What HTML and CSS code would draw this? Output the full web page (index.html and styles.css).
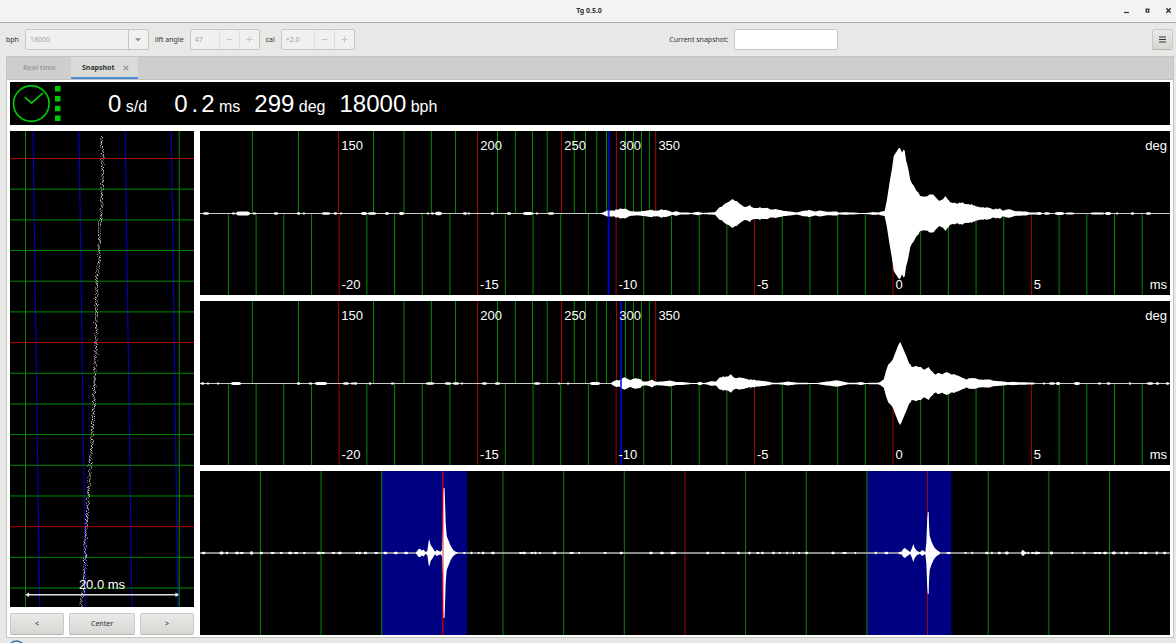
FILE: index.html
```html
<!DOCTYPE html>
<html lang="en">
<head>
<meta charset="utf-8">
<title>Tg 0.5.0</title>
<link rel="stylesheet" href="styles.css">
</head>
<body>
<header class="titlebar">
  <span class="title-space"></span>
  <h1 class="title">Tg 0.5.0</h1>
  <div class="window-buttons">
    <button class="window-button" aria-label="Minimize"><svg width="7" height="7"><path d="M1 5.5H6" stroke="#2e3436" stroke-width="1.2"/></svg></button>
    <button class="window-button" aria-label="Maximize"><svg width="7" height="7"><rect x="2.2" y="2.2" width="2.6" height="2.8" fill="none" stroke="#2e3436" stroke-width="1.3"/></svg></button>
    <button class="window-button" aria-label="Close"><svg width="7" height="7"><path d="M1.3 1.3L5.7 5.7M5.7 1.3L1.3 5.7" stroke="#2e3436" stroke-width="1.4"/></svg></button>
  </div>
</header>

<div class="toolbar">
  <label for="bph">bph</label>
  <div class="combo">
    <select id="bph" disabled><option>18000</option></select>
    <span class="combo-arrow"><svg width="6" height="4"><path d="M0 .3H6L3 3.5Z" fill="#8b8e8f"/></svg></span>
  </div>
  <label for="lift">lift angle</label>
  <div class="spin">
    <input id="lift" class="spin-lift" value="47" disabled>
    <button disabled aria-label="Decrease lift angle"><svg width="7" height="7"><path d="M.5 3.5H6.5" stroke="#c4c4c2"/></svg></button>
    <button disabled aria-label="Increase lift angle"><svg width="7" height="7"><path d="M.5 3.5H6.5M3.5 .5V6.5" stroke="#c4c4c2"/></svg></button>
  </div>
  <label for="cal">cal</label>
  <div class="spin">
    <input id="cal" class="spin-cal" value="+2.0" disabled>
    <button disabled aria-label="Decrease cal"><svg width="7" height="7"><path d="M.5 3.5H6.5" stroke="#c4c4c2"/></svg></button>
    <button disabled aria-label="Increase cal"><svg width="7" height="7"><path d="M.5 3.5H6.5M3.5 .5V6.5" stroke="#c4c4c2"/></svg></button>
  </div>
  <div class="snapshot-field">
    <label for="snap">Current snapshot:</label>
    <input id="snap" type="text">
  </div>
  <button class="menu-button raised" aria-label="Menu"><svg width="7" height="7"><path d="M0 1H7M0 3.5H7M0 6H7" stroke="#2e3436" stroke-width="1.2"/></svg></button>
</div>

<main class="notebook">
  <nav class="tabs">
    <button class="tab">Real time</button>
    <button class="tab tab-active">Snapshot <svg class="tab-close" width="6" height="6"><path d="M.8 .8L5.2 5.2M5.2 .8L.8 5.2" stroke="#8e9192" stroke-width="1.2"/></svg></button>
  </nav>
  <div class="page">
    <section class="readout">
      <svg class="clock" width="54" height="43">
        <g fill="none" stroke="#00c800" stroke-width="1.7">
          <circle cx="21.3" cy="21.6" r="17.8"/>
          <path d="M14.8 15.2L21.5 21.2L33 10.8"/>
        </g>
        <path d="M45 4h5.5v5.5h-5.5zM45 14h5.5v5.5h-5.5zM45 23.8h5.5v5.5h-5.5zM45 33.6h5.5v5.5h-5.5z" fill="#00c800"/>
      </svg>
      <p class="metric metric-rate"><span class="num">0</span> s/d</p>
      <p class="metric metric-beat"><span class="num">0<span class="point">.</span>2</span> ms</p>
      <p class="metric"><span class="num">299</span> deg</p>
      <p class="metric"><span class="num">18000</span> bph</p>
    </section>
    <section class="panels">
      <div class="paper-column">
        <svg class="plot" id="paper"></svg>
        <div class="paper-buttons">
          <button class="raised">&lt;</button>
          <button class="raised">Center</button>
          <button class="raised">&gt;</button>
        </div>
      </div>
      <div class="wave-column">
        <svg class="plot" id="tic"></svg>
        <svg class="plot" id="toc"></svg>
        <svg class="plot" id="period"></svg>
      </div>
    </section>
  </div>
</main>
<footer class="desktop-edge"><svg width="24" height="5"><circle cx="10.5" cy="11" r="8" fill="#e4ecf2" stroke="#3a6a94" stroke-width="1.5"/></svg></footer>
<script src="plots.js"></script>
</body>
</html>
```
FILE: styles.css
```css
* { box-sizing: border-box; }

body {
  margin: 0;
  height: 100vh;
  overflow: hidden;
  display: flex;
  flex-direction: column;
  background: #e8e8e6;
  color: #2e3436;
  font: 7px/10px "Noto Sans", "Open Sans", sans-serif;
}

button, input, select { font: inherit; color: inherit; }
p, h1 { margin: 0; }

.titlebar {
  flex: none;
  height: 23px;
  display: grid;
  grid-template-columns: 1fr auto 1fr;
  align-items: center;
  background: #f3f3f3;
  border-bottom: 1px solid #acaca9;
}
.title { font-size: 7px; font-weight: bold; padding-left: 2px; }
.window-buttons { display: flex; justify-content: flex-end; gap: 13px; padding-right: 3px; }
.window-button { border: 0; padding: 0; background: none; width: 8px; height: 8px; display: flex; }

.toolbar {
  flex: none;
  height: 33px;
  display: flex;
  align-items: center;
  gap: 6px;
  padding: 0 3px 0 6px;
}
.combo, .spin {
  height: 21px;
  display: flex;
  background: #f0f0ef;
  border: 1px solid #c6c6c3;
  border-radius: 2px;
  color: #a0a2a2;
}
.combo { width: 124px; position: relative; }
.combo select {
  flex: 1;
  appearance: none;
  border: 0;
  background: none;
  padding: 0 4px;
  color: #a0a2a2;
  opacity: 1;
}
.combo-arrow {
  position: absolute;
  right: 0;
  top: 0;
  bottom: 0;
  width: 20px;
  display: flex;
  align-items: center;
  justify-content: center;
  border-left: 1px solid #c6c6c3;
}
.spin input { border: 0; background: none; padding: 0 4px; min-width: 0; }
.spin-lift { width: 28px; }
.spin-cal { width: 32px; }
.spin button {
  width: 20px;
  padding: 0;
  border: 0;
  border-left: 1px solid #dededc;
  background: none;
  display: flex;
  align-items: center;
  justify-content: center;
}
.snapshot-field { flex: 1; display: flex; align-items: center; justify-content: center; gap: 6px; padding-left: 1px; }
.snapshot-field input { width: 104px; height: 21px; background: #fff; border: 1px solid #c6c6c3; border-radius: 2px; padding: 0 4px; }
.raised {
  border: 1px solid #c9c9c6;
  border-bottom-color: #b4b4b0;
  border-radius: 2px;
  background: linear-gradient(#e9e9e7, #d6d6d3);
}
.menu-button { width: 21px; height: 21px; padding: 0; display: flex; align-items: center; justify-content: center; }

.notebook {
  flex: 1;
  min-height: 0;
  margin: 0 2px 0 6px;
  display: flex;
  flex-direction: column;
  border: 1px solid #c4c4c1;
  background: #fff;
}
.tabs { flex: none; height: 23px; display: flex; background: #cececc; border-bottom: 1px solid #c0c0bd; }
.tab {
  border: 0;
  background: none;
  padding: 0 15px 0 16px;
  font-weight: bold;
  color: #9b9e9f;
  display: flex;
  align-items: center;
}
.tab-active { background: #dadad8; color: #2e3436; border-bottom: 2px solid #4a90d9; padding: 2px 9px 0 11px; gap: 8px; }

.page { flex: 1; min-height: 0; display: flex; flex-direction: column; gap: 6px; padding: 2px 3px; }
.readout {
  flex: none;
  height: 43px;
  display: flex;
  align-items: center;
  gap: 14px;
  background: #000;
  color: #fff;
  font: 16px/40px "Liberation Sans", Arial, sans-serif;
}
.clock { flex: none; }
.metric { white-space: nowrap; padding-top: 3px; }
.num { font-size: 24px; }
.point { margin: 0 3px 0 4px; }
.metric-rate { padding-left: 30px; }
.metric-beat { padding-left: 13px; }

.panels { flex: 1; min-height: 0; display: grid; grid-template-columns: 184px 1fr; gap: 6px; }
.paper-column, .wave-column { display: flex; flex-direction: column; gap: 6px; min-height: 0; min-width: 0; }
.plot {
  display: block;
  flex: 1 1 0;
  min-height: 0;
  width: 100%;
  background: #000;
  font: 13px "Liberation Sans", Arial, sans-serif;
}
.paper-buttons { flex: none; display: grid; grid-template-columns: 54fr 66fr 54fr; gap: 5px; }
.paper-buttons button { height: 22px; padding: 0; }

.desktop-edge { flex: none; height: 5px; padding-left: 6px; }
.desktop-edge svg { display: block; }
```
FILE: plots.js
```js
const NS = 'http://www.w3.org/2000/svg';
const GREEN = '#008a00', RED = '#a80000', BLUE = '#0000d8';

function add(parent, tag, attrs, text) {
  const node = document.createElementNS(NS, tag);
  for (const key in attrs) node.setAttribute(key, attrs[key]);
  if (text !== undefined) node.textContent = text;
  parent.appendChild(node);
  return node;
}

// Stretchable layer with its own coordinate system
function layer(svg, w, h) {
  return add(svg, 'svg', { width: '100%', height: '100%', viewBox: `0 0 ${w} ${h}`, preserveAspectRatio: 'none' });
}
function line(g, x1, y1, x2, y2, stroke, width = 1, opacity = 1) {
  add(g, 'line', { x1, y1, x2, y2, stroke, 'stroke-width': width, 'stroke-opacity': opacity });
}
function label(svg, x, y, w, h, text, anchor = 'start') {
  add(svg, 'text', { x: x / w * 100 + '%', y: y / h * 100 + '%', fill: '#fff', 'text-anchor': anchor }, text);
}

let seed = 7;
function random() {
  seed = (seed * 16807) % 2147483647;
  return seed / 2147483647;
}

const W = 970, H = 164, MID = 82.5;

// points: x, half height pairs; blips: start, end, half height triples
function envelope(g, points, mid, roughness) {
  const top = [], bottom = [];
  for (let i = 0; i + 3 < points.length; i += 2) {
    const [x0, a0, x1, a1] = points.slice(i, i + 4);
    const steps = Math.max(1, Math.round((x1 - x0) / 1.5));
    for (let s = 0; s < steps; s++) {
      const t = s / steps, x = x0 + (x1 - x0) * t;
      let a = a0 + (a1 - a0) * t;
      if (a > 3) a += (random() - .5) * roughness;
      top.push([x, mid - a]);
      bottom.push([x, mid + a]);
    }
  }
  add(g, 'polygon', { points: top.concat(bottom.reverse()).map(p => p.map(v => v.toFixed(1)).join()).join(' '), fill: '#fff' });
}
function blips(g, list, mid) {
  for (let i = 0; i < list.length; i += 3) {
    const [a, b, h] = list.slice(i, i + 3);
    const edge = Math.min(2, (b - a) / 3);
    const pts = [[a, mid - .8], [a + edge, mid - h], [b - edge, mid - h], [b, mid - .8], [b, mid + .8], [b - edge, mid + h], [a + edge, mid + h], [a, mid + .8]];
    add(g, 'polygon', { points: pts.join(' '), fill: '#fff' });
  }
}

const degreeLines = [52.4, 98.5, 138.5, 173.5, 204, 231.4, 255.5, 277.5, 297.5, 315.4, 332.5, 347.2, 361.5, 374.3, 385.5, 396.8, 406.5, 416.5, 425.5, 433.5, 441.5, 449.4, 455.7];
const degreeMarks = { 2: '150', 7: '200', 12: '250', 17: '300', 22: '350' };

function beatPlot(id, marker, points, small) {
  const svg = document.getElementById(id);
  const g = layer(svg, W, H);
  degreeLines.forEach((x, i) => line(g, x, 0, x, 82, i in degreeMarks ? RED : GREEN));
  for (let ms = -24; ms <= 9; ms++) {
    const x = 693 + ms * 27.69;
    line(g, x, 82, x, H, ms % 5 ? GREEN : RED);
  }
  line(g, 0, MID, W, MID, '#c8c8c8');
  blips(g, small, MID);
  envelope(g, points, MID, 1.2);
  line(g, marker, 0, marker, H, '#0000ff', 2, .75);
  for (const i in degreeMarks) label(svg, degreeLines[i] + 2.7, 19, W, H, degreeMarks[i]);
  for (let ms = -20; ms <= 5; ms += 5) label(svg, 693 + ms * 27.69 + 2.4, 158, W, H, String(ms));
  label(svg, 967, 19, W, H, 'deg', 'end');
  label(svg, 967, 158, W, H, 'ms', 'end');
}

beatPlot('tic', 408.7, [
  400, .5, 403, 1, 407, 3, 413, 3, 420, 4.7, 425, 4.7, 430, 2.5, 437, 1.7, 447, 3, 452, 3.3, 457, 2.7, 462, 4, 468, 3, 472, 1.3, 476, 2.3, 480, 1, 487, 1, 491, .6,
  498, 1.7, 503, .6, 510, 1, 515, 1.3, 520, 6, 526, 10, 532.7, 14, 538, 11.5, 545, 6, 550, 8, 554, 5.3, 560, 6, 567, 5.3, 572, 4, 575, 4.7, 583, 2.7, 592, 1.7,
  597, 1, 603, 2.7, 610, 3.3, 615, 2, 620, 3, 627, 1.7, 637, 2, 639, .7, 643, 1.3, 654, 1, 659, .5, 669, .7, 673, 1.5, 678, 1, 682, 2, 684.7, 2.7, 686.7, 12,
  689.3, 29, 692, 45, 693.7, 57, 696.7, 62, 699.3, 66, 700.3, 65, 702, 61, 703.3, 64, 704.7, 63, 706, 53, 708.3, 45, 710.3, 33, 713.7, 28, 716.7, 23, 720.3, 17.5,
  726, 17, 729.3, 18.5, 733.3, 18.5, 735.3, 16, 739.3, 13, 742.7, 14.5, 745.3, 17.5, 747.3, 15, 750.3, 11, 757.7, 10, 762.7, 11.3, 766, 9, 771.7, 9, 776, 7,
  783, 6.3, 789, 5.5, 794, 4.5, 799, 4.8, 804, 3, 809, 3.7, 816, 2.3, 826, 2, 830, 1, 836, 1, 839, 1.5, 843, .6
], [
  3, 9, 1.2, 32, 35, 1, 36, 50, 2, 53, 56, 1.1, 74, 78, 1.2, 97, 100, 1.2, 103, 105, 1, 122, 130, 1.3, 134, 137, 1.2, 140, 142, 1, 161, 167, 1.4, 168, 176, 1.3,
  185, 189, 1.2, 199, 204, 1.4, 227, 229, 1, 231, 234, 1, 235, 242, 1.8, 263, 267, 1.2, 268, 270, 1, 291, 294, 1.2, 307, 311, 1.2, 323, 333, 1.6, 336, 338, 1,
  348, 354, 1.2, 844, 850, 1.2, 855, 864, 1.6, 866, 874, 1.1, 891, 904, 1.1, 905, 911, 1.5, 916, 918, 1, 931, 934, 1.2, 946, 951, 1.2
]);

beatPlot('toc', 421, [
  411, .6, 414, 2.5, 417, 3.5, 420, 3.2, 423, 5.5, 424.7, 6.5, 427, 4.5, 431, 3.5, 435, 5.3, 439, 5, 443, 2, 447, 2, 452, 3.5, 456, 1.7, 463, 2, 470, 3, 476, 1.5,
  483, 1.5, 491, .6, 497, .6, 500, 1.7, 503, .6, 506, .8, 511, 2.3, 516, 2, 519, 5, 523, 7, 528, 7, 531, 8.7, 535, 5.5, 540, 6, 547, 4.5, 553, 3.8, 567, 2,
  573, .8, 577, .7, 582, 1, 588, 2, 598, .7, 617, .6, 622, 1.3, 630, 2.3, 637, 3.2, 643, 2, 648, .8, 656, .8, 661, 1.5, 665, .6, 674, .7, 678, .8, 680.3, 1.5,
  683.7, 4.5, 686, 12, 688.3, 18.5, 691.7, 22, 694.3, 28, 698.3, 38, 700.3, 42, 702, 38, 703.7, 34, 706.7, 27, 709.3, 20, 711.7, 17, 716, 17.5, 721, 16,
  724.3, 13.5, 728.7, 16.5, 731.3, 13, 734.3, 9, 739.3, 10.5, 742.7, 9.5, 746.7, 12, 751, 9, 756, 8.7, 761, 7, 766, 4.5, 773, 5.3, 779, 3.8, 788, 4, 793, 2.8,
  804, 2, 808, 1.2, 813, 1.7, 818, 1.3, 833, 1, 836, .5
], [
  1, 4, 1.3, 7, 9, 1, 17, 19, 1, 31, 41, 1.5, 97, 100, 1.3, 109, 112, 1, 115, 127, 1.5, 143, 149, 1.3, 151, 154, 1, 154, 157, 1.3, 169, 171, 1.2, 191, 194, 1,
  226, 234, 1.3, 245, 251, 1.3, 253, 259, 1.3, 261, 263, 1, 282, 287, 1.2, 295, 300, 1.2, 334, 340, 1.3, 358, 360, 1, 367, 369, 1, 390, 400, 1.6, 843, 845, 1,
  849, 855, 1.2, 856, 860, 1.6, 874, 880, 1.6, 898, 901, 1, 907, 910, 1.2, 929, 931, 1.2, 947, 953, 1.2, 956, 959, 1.2, 966, 969, 1.3
]);

function periodPlot() {
  const g = layer(document.getElementById('period'), W, H);
  add(g, 'rect', { x: 182, y: 0, width: 85, height: H, fill: '#000082' });
  add(g, 'rect', { x: 667, y: 0, width: 84.5, height: H, fill: '#000082' });
  for (let k = 0; k < 15; k++) {
    const x = 60.4 + 60.65 * k;
    line(g, x, 0, x, H, k % 4 === 3 ? '#b00018' : GREEN);
  }
  const mid = 82;
  line(g, 0, mid, W, mid, '#b4b4b4', 1.4);
  for (let x = 2; x < W; x += 3 + random() * 9) {
    if (random() < .75) blips(g, [x, x + 1.5 + random() * 2.5, 1 + random() * .4], mid);
  }
  blips(g, [50, 53, 1.8, 821, 825, 2.8, 835, 838, 1.5, 850, 853, 1.5, 956, 958, 1.6], mid);
  envelope(g, [
    216, .6, 218.7, 4, 220.3, 4, 221.7, 2.5, 223.7, 3.5, 225.3, 1, 227.3, 2, 228.7, 12, 229.3, 13.5, 230.7, 8, 232.7, 5, 235, 1.3, 236.7, 3, 240.3, 1.3, 242, 3,
    242.7, 22, 243.2, 65, 244.6, 65, 245.7, 30, 246.7, 17, 248.7, 12, 250.7, 7, 253.3, 3, 256, 1, 259, .6
  ], mid, 0);
  envelope(g, [
    701, .7, 703.3, 4, 704.7, 5, 708, 2.5, 710.3, 1, 712, 5, 713.3, 9, 714.7, 5, 717, 2, 720, .8, 722.3, 3, 725.3, 1, 726.3, 10, 727.3, 35, 727.8, 41, 728.7, 41,
    729, 28, 729.7, 17, 731.7, 11, 734, 6, 736.7, 3, 740, .8, 741, .6
  ], mid, 0);
  line(g, 243, 0, 243, H, '#c80010', 1, .8);
}
periodPlot();

function paperPlot() {
  const w = 184, h = 476;
  const svg = document.getElementById('paper');
  const g = layer(svg, w, h);
  for (const x of [23, 69, 115.2, 161.3]) line(g, x, 0, x + 6.7, h, BLUE);
  line(g, 15.5, 0, 15.5, h, GREEN);
  line(g, 169.2, 0, 169.2, h, GREEN);
  for (let k = 0; k < 15; k++) {
    const y = 27.5 + 30.68 * k;
    line(g, 0, y, w, y, k % 6 ? GREEN : RED);
  }
  // [y, x] vertices of the beat trace
  const path = [[5, 91], [14, 91], [19, 92.5], [48, 91.8], [77, 91], [94, 89], [129, 88.3], [149, 86.3], [184, 86], [221, 85.3], [244, 84.3], [269, 83.5], [299, 82], [317, 81], [334, 79.3], [362, 78], [387, 76.3], [414, 74.7], [447, 74], [459, 72.5], [476, 70]];
  let i = 0;
  for (let y = 5; y < h; y++) {
    while (i < path.length - 2 && y >= path[i + 1][0]) i++;
    const [y0, x0] = path[i], [y1, x1] = path[i + 1];
    const x = x0 + (x1 - x0) * (y - y0) / (y1 - y0);
    for (let n = 0; n < 2; n++) {
      const shade = random() < .12 ? .7 : .22 + random() * .28;
      const spread = random() < .1 ? 5 : 3;
      add(g, 'rect', { x: Math.round(x + (random() - .5) * spread), y, width: 1, height: 1, fill: '#fff', 'fill-opacity': shade.toFixed(2) });
    }
  }
  line(g, 18, 463.7, 167, 463.7, '#ddd', 1.5);
  add(g, 'path', { d: 'M15.5 463.7L19 461.5V465.9ZM169 463.7L165.5 461.5V465.9Z', fill: '#fff' });
  label(svg, 92, 458, w, h, '20.0 ms', 'middle');
}
paperPlot();
```
